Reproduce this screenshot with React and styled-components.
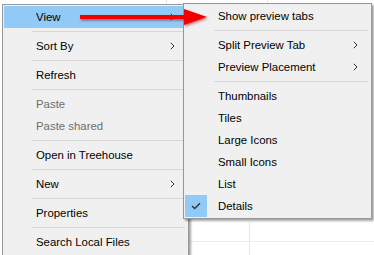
import React from "react"
import styled, { createGlobalStyle } from "styled-components"

const GlobalStyle = createGlobalStyle`
  html, body {
    margin: 0;
    padding: 0;
    background: #ffffff;
  }
`

const Page = styled.div`
  position: relative;
  width: 374px;
  height: 255px;
  overflow: hidden;
  background-color: #ffffff;
  background-image:
    linear-gradient(#e6e6e6, #e6e6e6),
    linear-gradient(#e6e6e6, #e6e6e6),
    linear-gradient(#e6e6e6, #e6e6e6),
    linear-gradient(#ececec, #ececec);
  background-repeat: no-repeat;
  background-size: 1px 6px, 1px 4px, 1px 40px, 200px 1px;
  background-position: 166px 0, 267px 0, 249px 222px, 190px 241px;
  font-family: "Liberation Sans", Arial, sans-serif;
  font-size: 11.4px;
  color: #000;
`

const Menu = styled.div`
  position: absolute;
  left: ${(p) => p.$left}px;
  top: ${(p) => p.$top}px;
  width: ${(p) => p.$width}px;
  min-height: ${(p) => p.$minHeight || 0}px;
  box-sizing: border-box;
  padding: 1px;
  background: #f0f0f0;
  border: 1px solid #979797;
  box-shadow: 2px 2px 2px rgba(0, 0, 0, 0.35);
  display: flex;
  flex-direction: column;
`

const Item = styled.div`
  position: relative;
  height: 22px;
  display: flex;
  align-items: center;
  padding-left: ${(p) => p.$indent}px;
  padding-right: 12px;
  color: ${(p) => (p.$disabled ? "#6d6d6d" : "#000")};
  background: ${(p) => (p.$active ? "#91c9f7" : "transparent")};
  white-space: nowrap;
`

const Label = styled.span`
  flex: 1;
`

const Separator = styled.div`
  height: 1px;
  margin: 3px 2px 3px ${(p) => p.$indent}px;
  background: #d7d7d7;
`

const CheckBox = styled.div`
  position: absolute;
  left: 0;
  top: 0;
  width: 22px;
  height: 22px;
  background: #91c9f7;
  display: flex;
  align-items: center;
  justify-content: center;
`

const Chevron = () => (
  <svg width="5" height="8" viewBox="0 0 5 8">
    <polyline points="0.8,0.8 4,4 0.8,7.2" fill="none" stroke="#333" strokeWidth="1" />
  </svg>
)

const Check = () => (
  <svg width="10" height="8" viewBox="0 0 10 8">
    <polyline points="1,4 3.7,6.6 9,1.2" fill="none" stroke="#333" strokeWidth="1.4" />
  </svg>
)

const Annotation = styled.svg`
  position: absolute;
  left: 0;
  top: 0;
  pointer-events: none;
`

const mainItems = [
  { label: "View", sub: true, active: true },
  "sep",
  { label: "Sort By", sub: true },
  "sep",
  { label: "Refresh" },
  "sep",
  { label: "Paste", disabled: true },
  { label: "Paste shared", disabled: true },
  "sep",
  { label: "Open in Treehouse" },
  "sep",
  { label: "New", sub: true },
  "sep",
  { label: "Properties" },
  "sep",
  { label: "Search Local Files" },
]

const viewItems = [
  { label: "Show preview tabs" },
  "sep",
  { label: "Split Preview Tab", sub: true },
  { label: "Preview Placement", sub: true },
  "sep",
  { label: "Thumbnails" },
  { label: "Tiles" },
  { label: "Large Icons" },
  { label: "Small Icons" },
  { label: "List" },
  { label: "Details", checked: true },
]

const renderItems = (items, indent, sepIndent) =>
  items.map((it, i) =>
    it === "sep" ? (
      <Separator key={i} $indent={sepIndent} />
    ) : (
      <Item key={i} $indent={indent} $active={it.active} $disabled={it.disabled}>
        {it.checked && (
          <CheckBox>
            <Check />
          </CheckBox>
        )}
        <Label>{it.label}</Label>
        {it.sub && <Chevron />}
      </Item>
    )
  )

export default function App() {
  return (
    <Page>
      <GlobalStyle />
      <Menu $left={2} $top={4} $width={187} $minHeight={270}>
        {renderItems(mainItems, 32, 28)}
      </Menu>
      <Menu $left={183} $top={3} $width={189}>
        {renderItems(viewItems, 33, 29)}
      </Menu>
      <Annotation width="374" height="255">
        <defs>
          <filter id="sh" x="-10%" y="-50%" width="130%" height="250%">
            <feDropShadow dx="1" dy="1.5" stdDeviation="1" floodColor="#700" floodOpacity="0.5" />
          </filter>
        </defs>
        <g filter="url(#sh)" fill="#f00000">
          <rect x="80" y="15" width="106" height="4" />
          <polygon points="184,9 207,17 184,25" />
        </g>
      </Annotation>
    </Page>
  )
}
